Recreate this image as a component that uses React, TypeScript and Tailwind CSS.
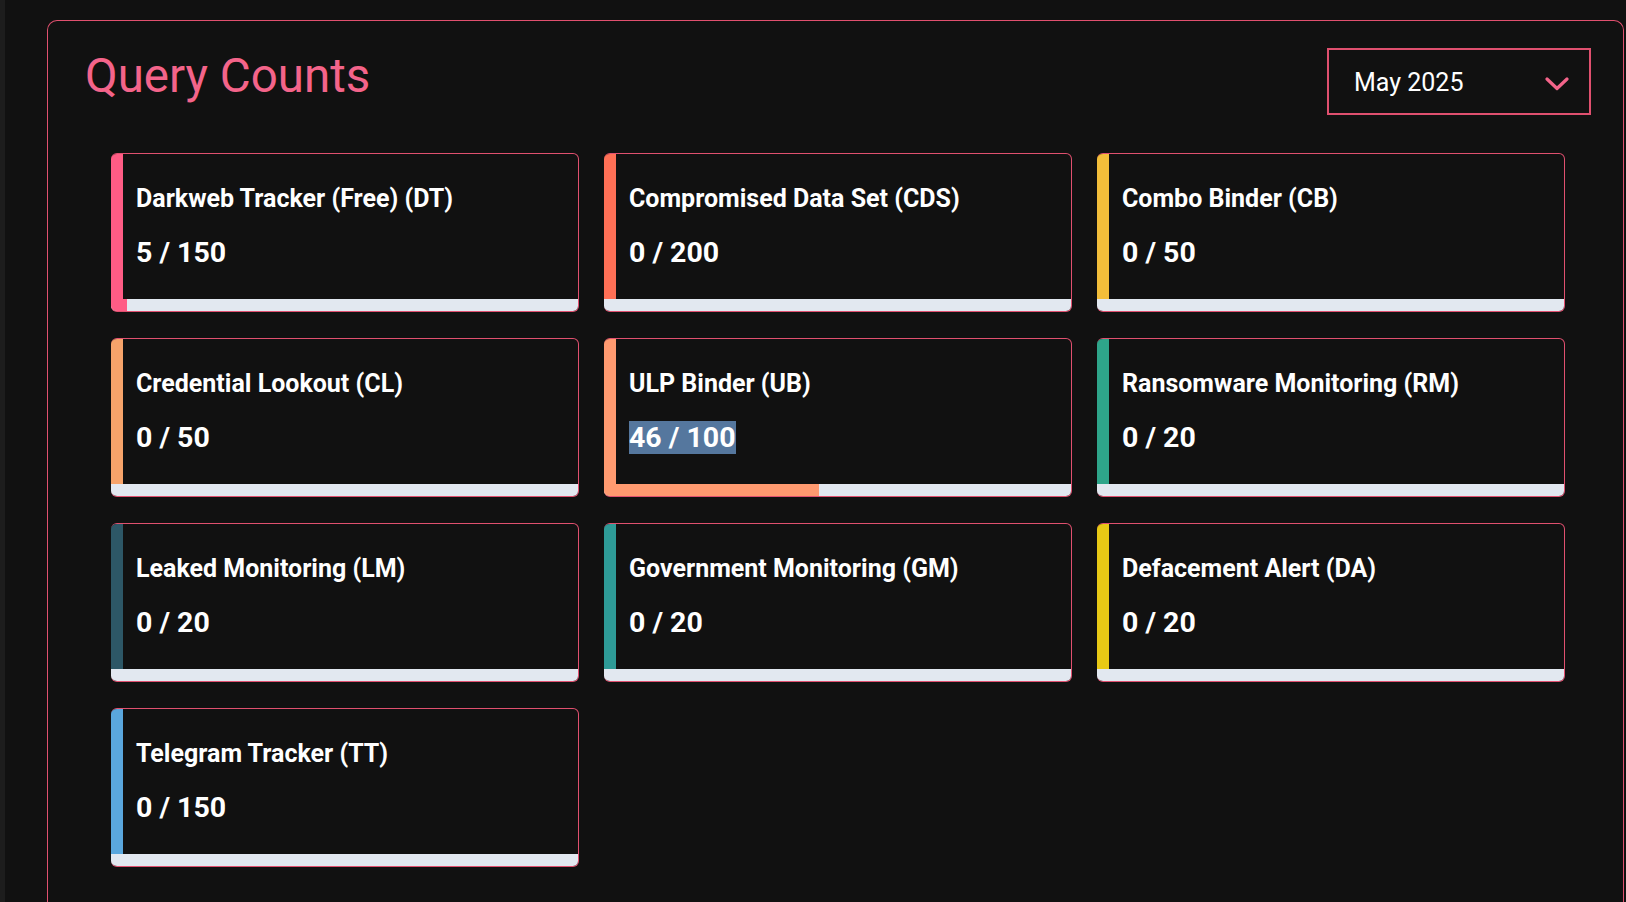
type Counter = {
    name: string;
    used: number;
    limit: number;
    accent: string;
    fill: string;
    selected?: boolean;
};

const counters: Counter[] = [
    { name: "Darkweb Tracker (Free) (DT)", used: 5, limit: 150, accent: "bg-[#ff5c85]", fill: "bg-[#ff5c85]" },
    { name: "Compromised Data Set (CDS)", used: 0, limit: 200, accent: "bg-[#ff7056]", fill: "bg-[#ff7056]" },
    { name: "Combo Binder (CB)", used: 0, limit: 50, accent: "bg-[#f3be3a]", fill: "bg-[#f3be3a]" },
    { name: "Credential Lookout (CL)", used: 0, limit: 50, accent: "bg-[#f6a36a]", fill: "bg-[#f6a36a]" },
    { name: "ULP Binder (UB)", used: 46, limit: 100, accent: "bg-[#ff9a70]", fill: "bg-[#ff9a70]", selected: true },
    { name: "Ransomware Monitoring (RM)", used: 0, limit: 20, accent: "bg-[#2ea58a]", fill: "bg-[#2ea58a]" },
    { name: "Leaked Monitoring (LM)", used: 0, limit: 20, accent: "bg-[#2d5766]", fill: "bg-[#2d5766]" },
    { name: "Government Monitoring (GM)", used: 0, limit: 20, accent: "bg-[#2e9b97]", fill: "bg-[#2e9b97]" },
    { name: "Defacement Alert (DA)", used: 0, limit: 20, accent: "bg-[#e8c915]", fill: "bg-[#e8c915]" },
    { name: "Telegram Tracker (TT)", used: 0, limit: 150, accent: "bg-[#5aa7dd]", fill: "bg-[#5aa7dd]" },
];

function CounterCard({ item }: { item: Counter }) {
    const pct = (item.used / item.limit) * 100;
    return (
        <div className="flex flex-col h-[159px] rounded-[6px] overflow-hidden border-y-[1.5px] border-r-[1.5px] border-[#e0506f] bg-[#111111]">
            <div className="flex flex-1">
                <div className={`w-[12px] shrink-0 ${item.accent}`}></div>
                <div className="flex flex-col pl-[13px] pt-[29px]">
                    <span className="text-[25px] leading-[32px] font-bold text-white">{item.name}</span>
                    <span className="mt-[20px] text-[28.5px] leading-[36px] font-bold text-white">
                        <span className={item.selected ? "bg-[#55779e]" : ""}>{item.used} / {item.limit}</span>
                    </span>
                </div>
            </div>
            <div className="h-[12px] bg-[#e2e8f0] shrink-0">
                {/* bar width comes from data */}
                <div className={`h-full ${item.fill}`} style={{ width: `${pct}%` }}></div>
            </div>
        </div>
    );
}

export default function App() {
    return (
        <div className="w-[1626px] h-[902px] overflow-hidden bg-[#111111] border-l-[5px] border-[#1d1d1d] pt-[20px] pl-[42px] pr-[2px]" style={{ fontFamily: "Roboto, 'Noto Sans', sans-serif" }}>
            <div className="min-h-[900px] rounded-t-[10px] border-[1.5px] border-b-0 border-[#e0506f] pl-[37px] pr-8 pt-[26px]">
                <div className="flex justify-between items-start mb-[38px]">
                    <h1 className="text-[47.5px] leading-[58px] font-normal text-[#f4648a]">Query Counts</h1>
                    <button className="mt-[1px] w-[264px] h-[67px] border-2 border-[#e0506f] flex items-center justify-between pl-[25px] pr-[20px] text-[25px] text-white bg-[#111111]">
                        <span className="pt-[3px]">May 2025</span>
                        <svg width="24" height="14" viewBox="0 0 24 14" fill="none" stroke="#f4648a" strokeWidth="3.2" strokeLinecap="round" strokeLinejoin="round" className="mt-[4px]">
                            <polyline points="2,2 12,11.5 22,2" />
                        </svg>
                    </button>
                </div>
                <div className="grid grid-cols-3 gap-x-[25px] gap-y-[26px] pl-[26px] pr-[26px]">
                    {counters.map((c) => (
                        <CounterCard key={c.name} item={c} />
                    ))}
                </div>
            </div>
        </div>
    );
}
